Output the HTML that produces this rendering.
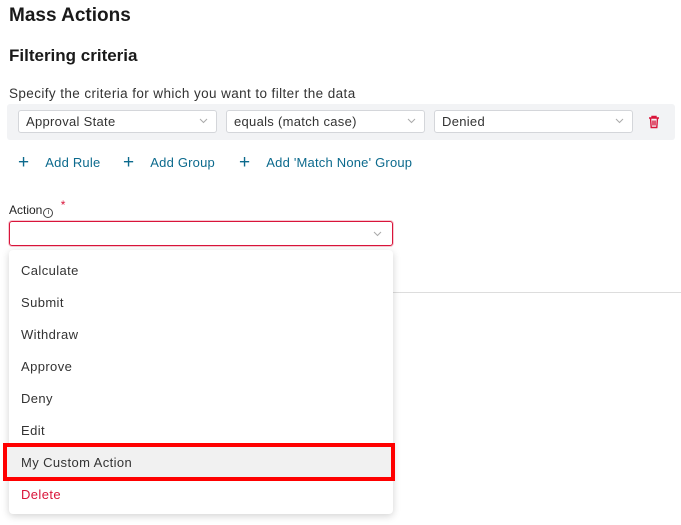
<!DOCTYPE html>
<html><head><style>
body{margin:0;width:681px;height:525px;background:#fff;font-family:"Liberation Sans",sans-serif;position:relative;overflow:hidden;color:#222}
.a{position:absolute}
.sel{position:absolute;top:110px;width:199px;height:23px;background:#fff;border:1px solid #d4d6da;border-radius:3px;box-sizing:border-box;font-size:13px;letter-spacing:0.3px;line-height:21px;padding-left:7px;color:#333}
.chev{position:absolute;right:8px;top:5px}
.add{position:absolute;top:151px;font-size:13px;letter-spacing:0.2px;color:#0c6a8d}
.add b{font-weight:normal;font-size:19px;position:relative;top:1px;margin-right:16px}
.it{position:absolute;left:21px;font-size:13px;letter-spacing:0.4px;color:#333}
</style></head><body>
<div class="a" style="left:9px;top:5px;font-size:19px;font-weight:bold;color:#1a1a1a">Mass Actions</div>
<div class="a" style="left:9px;top:46px;font-size:17px;font-weight:bold;color:#1a1a1a">Filtering criteria</div>
<div class="a" style="left:9px;top:86px;font-size:13.5px;letter-spacing:0.4px;color:#333">Specify the criteria for which you want to filter the data</div>
<div class="a" style="left:7px;top:104px;width:668px;height:36px;background:#f2f3f5;border-radius:3px"></div>
<div class="sel" style="left:18px">Approval State<svg class="chev" width="9" height="9" viewBox="0 0 9 9"><path d="M1 3l3.5 3.5L8 3" stroke="#aaa" fill="none"/></svg></div>
<div class="sel" style="left:226px">equals (match case)<svg class="chev" width="9" height="9" viewBox="0 0 9 9"><path d="M1 3l3.5 3.5L8 3" stroke="#aaa" fill="none"/></svg></div>
<div class="sel" style="left:434px">Denied<svg class="chev" width="9" height="9" viewBox="0 0 9 9"><path d="M1 3l3.5 3.5L8 3" stroke="#aaa" fill="none"/></svg></div>
<svg class="a" style="left:648px;top:115px" width="12" height="14" viewBox="0 0 12 14"><path d="M1 3h10M4 3V1.5h4V3M2.5 3l.7 9.5h5.6L9.5 3M5 5.5v5M7 5.5v5" stroke="#d9143a" stroke-width="1.4" fill="none"/></svg>
<div class="add" style="left:18px"><b>+</b>Add Rule</div>
<div class="add" style="left:123px"><b>+</b>Add Group</div>
<div class="add" style="left:239px"><b>+</b>Add 'Match None' Group</div>
<div class="a" style="left:9px;top:203px;font-size:12px;color:#222">Action<span style="border:1px solid #444;border-radius:50%;display:inline-block;width:8px;height:8px;line-height:8px;text-align:center;font-size:7px;margin-left:1px">i</span> <span style="color:#d9143a;position:relative;top:-5px;margin-left:4px">*</span></div>
<div class="a" style="left:9px;top:221px;width:384px;height:25px;border:1px solid #d9143a;border-radius:3px;box-sizing:border-box;box-shadow:0 0 0 1px #f6c9d2"><svg class="chev" style="position:absolute;right:10px;top:7px" width="9" height="9" viewBox="0 0 9 9"><path d="M1 3l3.5 3.5L8 3" stroke="#aaa" fill="none"/></svg></div>
<div class="a" style="left:393px;top:292px;width:288px;height:1px;background:#ddd"></div>
<div class="a" style="left:9px;top:250px;width:384px;height:264px;background:#fff;border-radius:4px;box-shadow:0 2px 8px rgba(0,0,0,.18)"></div>
<div class="a" style="left:7px;top:447px;width:384px;height:32px;background:#f1f1f1"></div>
<div class="a" style="left:3px;top:443px;width:392px;height:38px;border:4px solid #f00;box-sizing:border-box"></div>
<div class="it" style="top:263px">Calculate</div>
<div class="it" style="top:295px">Submit</div>
<div class="it" style="top:327px">Withdraw</div>
<div class="it" style="top:359px">Approve</div>
<div class="it" style="top:391px">Deny</div>
<div class="it" style="top:423px">Edit</div>
<div class="it" style="top:455px">My Custom Action</div>
<div class="it" style="top:487px;color:#d9143a">Delete</div>
</body></html>
